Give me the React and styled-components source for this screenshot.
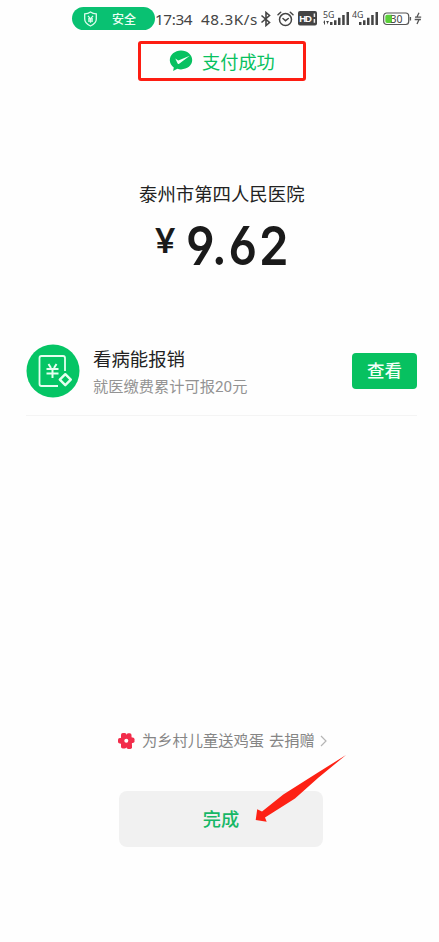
import React from 'react';
import styled, { createGlobalStyle } from 'styled-components';

const GREEN = '#07c160';

const GlobalStyle = createGlobalStyle`
  * { box-sizing: border-box; }
  body {
    margin: 0;
    background: #fff;
    font-family: Roboto, "Noto Sans CJK SC", sans-serif;
  }
  svg { display: block; flex: none; }
`;

const Screen = styled.main`
  width: 439px;
  height: 942px;
  background: #fefefe;
  overflow: hidden;
  display: flex;
  flex-direction: column;
`;

const StatusBar = styled.header`
  height: 37px;
  padding-left: 72px;
  display: flex;
  align-items: center;
  flex: none;
  white-space: nowrap;
`;

const SafetyPill = styled.div`
  width: 83px;
  height: 23px;
  border-radius: 12px;
  background: #09c172;
  color: #eafff3;
  display: flex;
  align-items: center;
  padding-left: 11px;
  gap: 14px;
  font-size: 12px;
  font-weight: 500;
`;

const PillLabel = styled.span`
  line-height: 20px;
  padding-top: 2px;
`;

const StatusText = styled.span`
  font-family: "Noto Sans", sans-serif;
  font-size: 15.3px;
  line-height: 20px;
  color: #444;
  letter-spacing: ${(p) => p.$spacing};
  width: ${(p) => p.$width}px;
  flex: none;
`;

const StatusIcons = styled.div`
  display: flex;
  align-items: center;
`;

const ResultFrame = styled.section`
  align-self: flex-start;
  margin: 4px 0 0 138px;
  width: 168px;
  height: 40px;
  border: 3px solid #fd1d12;
  border-radius: 3px;
  display: flex;
  align-items: center;
  padding-left: 28px;
  gap: 9px;
  flex: none;
`;

const ResultText = styled.span`
  font-size: 18.2px;
  line-height: 30px;
  padding-top: 3px;
  color: ${GREEN};
  white-space: nowrap;
`;

const Payee = styled.h1`
  margin: 100px 0 0 139px;
  height: 28px;
  line-height: 28px;
  font-size: 18.4px;
  font-weight: 400;
  color: #222;
  white-space: nowrap;
  flex: none;
`;

const Amount = styled.div`
  margin: 9px 0 0 155px;
  height: 56px;
  display: flex;
  flex: none;
  color: #1a1a1a;
`;

const Currency = styled.span`
  width: 31px;
  font: 700 35px/43px Lato, sans-serif;
`;

const Value = styled.span`
  font: 600 53.6px/56px Inter, sans-serif;
  font-feature-settings: "ss01" 1, "cv09" 1;
  letter-spacing: 2px;
  transform: scaleX(0.885);
  transform-origin: left;
`;

const Offer = styled.section`
  margin: 53px 22px 0 26px;
  height: 89px;
  border-bottom: 1px solid #f4f4f4;
  display: flex;
  align-items: flex-start;
  flex: none;
  padding-top: 17px;
`;

const OfferBody = styled.div`
  margin-left: 13px;
  padding-top: 1px;
  flex: 1;
  white-space: nowrap;
`;

const OfferTitle = styled.h2`
  margin: 0;
  font-size: 18.4px;
  font-weight: 400;
  line-height: 29px;
  color: #222;
`;

const OfferNote = styled.p`
  margin: 0;
  font-size: 15.25px;
  line-height: 26px;
  color: #939393;
`;

const ViewButton = styled.button`
  width: 65px;
  height: 36px;
  margin-top: 9px;
  padding: 0;
  border: 0;
  border-radius: 4px;
  background: ${GREEN};
  color: #f2fff7;
  font: 500 17.5px/36px Roboto, "Noto Sans CJK SC", sans-serif;
`;

const Donation = styled.a`
  margin: 312px 0 0 117px;
  height: 26px;
  display: flex;
  align-items: center;
  flex: none;
  color: #858585;
  font-size: 15.25px;
  line-height: 26px;
  white-space: nowrap;
`;

const DonationText = styled.span`
  margin-left: ${(p) => p.$gap}px;
`;

const Finish = styled.div`
  position: relative;
  width: 204px;
  height: 56px;
  margin: 37px 0 0 119px;
  flex: none;
`;

const FinishButton = styled.button`
  width: 100%;
  height: 100%;
  padding: 2px 0 0;
  border: 0;
  border-radius: 8px;
  background: #f1f1f1;
  color: #16b766;
  font: 500 18.2px/54px Roboto, "Noto Sans CJK SC", sans-serif;
`;

const Pointer = styled.svg`
  position: absolute;
  left: 135px;
  top: -37px;
  pointer-events: none;
`;

const ShieldIcon = () => (
  <svg width="15" height="16" viewBox="0 0 15 16" fill="none" stroke="#dcfced" strokeWidth="1.3">
    <path d="M7.500 1C5.700 2.300 3.500 2.800 1.700 2.900V8c0 3.200 2.400 5.500 5.800 7 3.400-1.500 5.800-3.800 5.800-7V2.900C11.500 2.800 9.300 2.300 7.500 1Z" />
    <path d="m5 4.800 2.500 3 2.500-3M7.500 7.800v4M5 8h5M5 10h5" />
  </svg>
);

const BluetoothIcon = () => (
  <svg width="12" height="16" viewBox="0 0 12 16" fill="none" stroke="#444" strokeWidth="1.600">
    <path d="m1.500 4.500 8 7L6 14.500v-13l3.500 3-8 7" />
  </svg>
);

const AlarmIcon = () => (
  <svg width="17" height="16" viewBox="0 0 17 16" fill="none" stroke="#444" strokeWidth="1.500" strokeLinecap="round">
    <circle cx="8.500" cy="8.600" r="6" />
    <path d="M1 3.800 3.700 1.300M16 3.800l-2.700-2.500M6 7.500l2.500 2.200L11.300 7.500" />
  </svg>
);

const HdIcon = () => (
  <svg width="19" height="15" viewBox="0 0 19 15">
    <rect width="19" height="14.500" rx="2" fill="#444" />
    <text x="1.300" y="11" fill="#fff" fontSize="9.500" fontWeight="700" textLength="12.500" fontFamily="Liberation Sans, sans-serif">HD</text>
    <path d="M16.400 2.500v3.500M16.400 8v3.800" stroke="#eee" strokeWidth="1.500" />
  </svg>
);

const SignalIcon = ({ label, data }) => (
  <svg width="27" height="17" viewBox="0 0 27 17" fill="#444">
    <text x="0" y="8" fontSize="8.800" fontFamily="Noto Sans, sans-serif">{label}</text>
    {data && <path d="m0 12.500 2-2.500v4.500H1v-2Zm3-1.500h3l-2 3.500V12.500Z" />}
    <path d="M7 12h2.500v3H7ZM11 10.300h2.500V15H11ZM15 7.800h2.500V15H15ZM19.200 5h2.500v10h-2.500ZM23.500 2H26v13h-2.500Z" />
  </svg>
);

const BatteryIcon = () => (
  <svg width="29" height="14" viewBox="0 0 29 14">
    <rect x="0.700" y="1" width="25" height="11.500" rx="3" fill="#fff" stroke="#555" strokeWidth="1.200" />
    <path d="M4 2.700h5v8.200H4a1.700 1.700 0 0 1-1.700-1.700V4.400A1.700 1.700 0 0 1 4 2.700Z" fill="#5bcf3a" />
    <path d="M27.400 5v3.500" stroke="#555" strokeWidth="1.400" />
    <text x="7.500" y="10.700" fill="#444" fontSize="10.500" fontFamily="Noto Sans, sans-serif">30</text>
  </svg>
);

const ChargeIcon = () => (
  <svg width="8" height="13" viewBox="0 0 8 13" fill="none" stroke="#555" strokeWidth="1.300">
    <path d="M5 .8 2.700 5.500M5.300 7 3 12M1 5.200h6.200M.7 7.500h6.200" />
  </svg>
);

const PayIcon = () => (
  <svg width="24" height="22" viewBox="0 0 24 22">
    <path d="M12 .6C5.800.6.800 4.900.8 10.200c0 2.900 1.600 5.600 4 7.300L4.100 21l4.300-2.200c1.100.4 2.300.6 3.600.6 6.200 0 11.200-4 11.200-9.300S18.200.6 12 .6Z" fill={GREEN} />
    <path d="M6.300 8.500 9.300 10.500 20.800 5.800 9.800 13.900c-.5.400-1 .2-1.200-.3Z" fill="#f4fff8" />
  </svg>
);

const InsuranceIcon = () => (
  <svg width="54" height="54" viewBox="0 0 54 54" fill="none" stroke="#e6fff0" strokeWidth="1.800">
    <circle cx="27" cy="27" r="26.500" fill="#05c565" stroke="none" />
    <path d="M32 42H15.500a2 2 0 0 1-2-2V14a2 2 0 0 1 2-2H37a2 2 0 0 1 2 2v13" />
    <path d="m22.500 20 2.500 4M30.500 20 28 24M20.500 25h12M20.500 29.500h12M26.500 25v9" strokeWidth="2" />
    <path d="m39.300 30.200 5.500 5.500-5.500 5.500-5.500-5.500Z" strokeWidth="2.400" strokeLinejoin="round" />
  </svg>
);

const FlowerIcon = () => (
  <svg width="18" height="18" viewBox="0 0 18 18" fill="#f22d4b">
    <rect x="4" y="1" width="5.500" height="6" rx="1.800" />
    <rect x="9.500" y="1.300" width="5" height="6" rx="1.800" />
    <rect x="11.500" y="5.500" width="6" height="5.500" rx="1.800" />
    <rect x="9.500" y="11" width="5.500" height="6" rx="1.800" />
    <rect x="4" y="10.500" width="5.500" height="6" rx="1.800" />
    <rect x="1" y="6" width="6" height="5.500" rx="1.800" />
    <circle cx="9.300" cy="9" r="6.300" />
    <circle cx="9.300" cy="8.800" r="2" fill="#fff" />
  </svg>
);

const ChevronIcon = () => (
  <svg width="8" height="12" viewBox="0 0 8 12" fill="none" stroke="#b5b5b5" strokeWidth="1.200">
    <path d="m1 1 5 5-5 5" />
  </svg>
);

const Gap = styled.span`
  width: ${(p) => p.$w}px;
  flex: none;
`;

export default function App() {
  return (
    <>
      <GlobalStyle />
      <Screen>
        <StatusBar>
          <SafetyPill>
            <ShieldIcon />
            <PillLabel>安全</PillLabel>
          </SafetyPill>
          <StatusText $width={46} $spacing="-0.4px">17:34</StatusText>
          <StatusText $width={59} $spacing="0.6px">48.3K/s</StatusText>
          <StatusIcons>
            <BluetoothIcon />
            <Gap $w={5} />
            <AlarmIcon />
            <Gap $w={4} />
            <HdIcon />
            <Gap $w={6} />
            <SignalIcon label="5G" data />
            <Gap $w={2} />
            <SignalIcon label="4G" />
            <Gap $w={4} />
            <BatteryIcon />
            <Gap $w={2} />
            <ChargeIcon />
          </StatusIcons>
        </StatusBar>

        <ResultFrame>
          <PayIcon />
          <ResultText>支付成功</ResultText>
        </ResultFrame>

        <Payee>泰州市第四人民医院</Payee>
        <Amount>
          <Currency>¥</Currency>
          <Value>9.62</Value>
        </Amount>

        <Offer>
          <InsuranceIcon />
          <OfferBody>
            <OfferTitle>看病能报销</OfferTitle>
            <OfferNote>就医缴费累计可报20元</OfferNote>
          </OfferBody>
          <ViewButton>查看</ViewButton>
        </Offer>

        <Donation>
          <FlowerIcon />
          <DonationText $gap={7}>为乡村儿童送鸡蛋</DonationText>
          <DonationText $gap={5}>去捐赠</DonationText>
          <Gap $w={5} />
          <ChevronIcon />
        </Donation>

        <Finish>
          <FinishButton>完成</FinishButton>
          <Pointer width="94" height="70" viewBox="0 0 94 70">
            <path d="M1.700 66 3.200 55.300 8 57.500 29.300 40.500 64 18.500 92 1 64 24 41 44.500 11 63.500 12.700 67.700Z" fill="#fd2114" />
          </Pointer>
        </Finish>
      </Screen>
    </>
  );
}
